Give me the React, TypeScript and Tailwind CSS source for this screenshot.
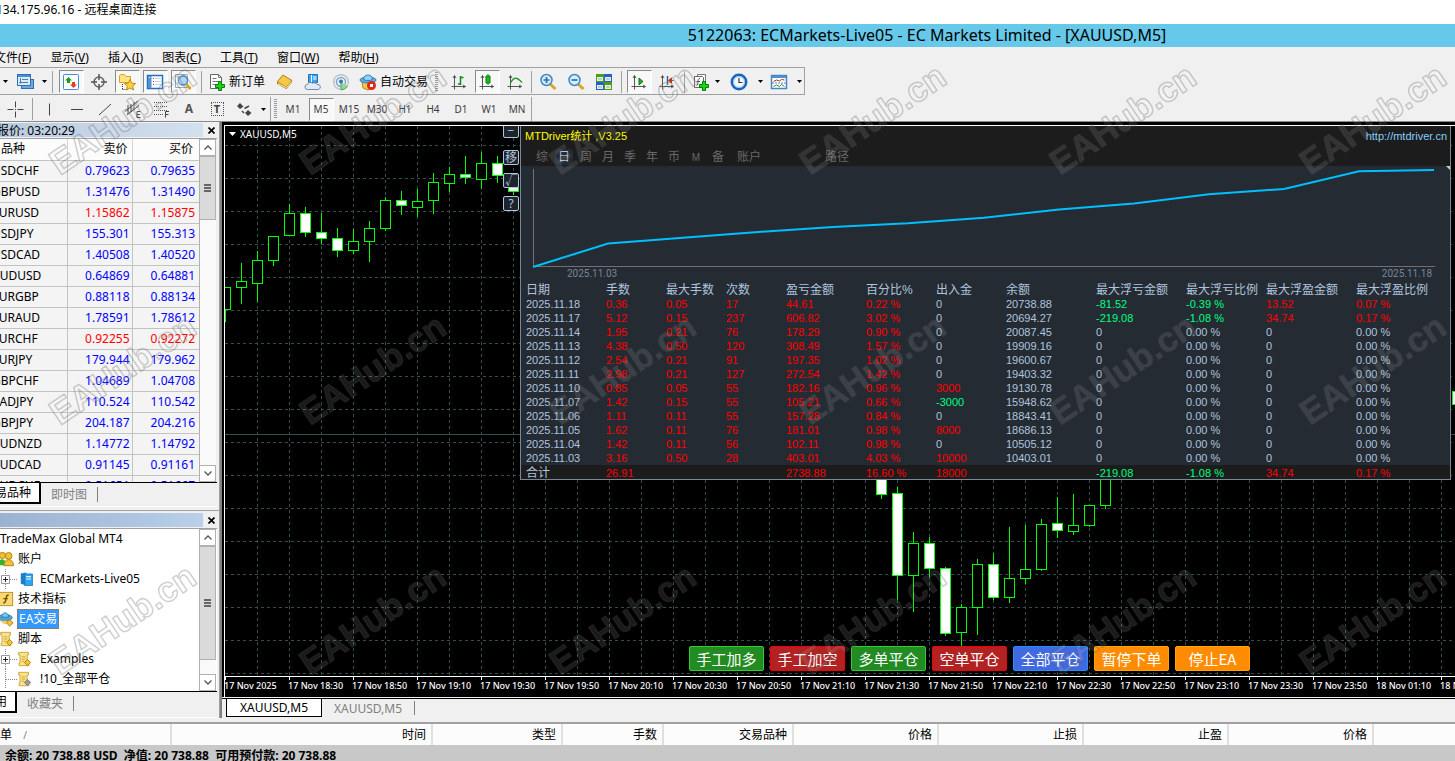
import type { ReactNode } from 'react';

const menus = [
  ['文件', 'F'],
  ['显示', 'V'],
  ['插入', 'I'],
  ['图表', 'C'],
  ['工具', 'T'],
  ['窗口', 'W'],
  ['帮助', 'H'],
];

const periods = ['M1', 'M5', 'M15', 'M30', 'H1', 'H4', 'D1', 'W1', 'MN'];

const quotes = [
  { symbol: 'USDCHF', bid: '0.79623', ask: '0.79635' },
  { symbol: 'GBPUSD', bid: '1.31476', ask: '1.31490' },
  { symbol: 'EURUSD', bid: '1.15862', ask: '1.15875', down: true },
  { symbol: 'USDJPY', bid: '155.301', ask: '155.313' },
  { symbol: 'USDCAD', bid: '1.40508', ask: '1.40520' },
  { symbol: 'AUDUSD', bid: '0.64869', ask: '0.64881' },
  { symbol: 'EURGBP', bid: '0.88118', ask: '0.88134' },
  { symbol: 'EURAUD', bid: '1.78591', ask: '1.78612' },
  { symbol: 'EURCHF', bid: '0.92255', ask: '0.92272', down: true },
  { symbol: 'EURJPY', bid: '179.944', ask: '179.962' },
  { symbol: 'GBPCHF', bid: '1.04689', ask: '1.04708' },
  { symbol: 'CADJPY', bid: '110.524', ask: '110.542' },
  { symbol: 'GBPJPY', bid: '204.187', ask: '204.216' },
  { symbol: 'AUDNZD', bid: '1.14772', ask: '1.14792' },
  { symbol: 'AUDCAD', bid: '0.91145', ask: '0.91161' },
  { symbol: 'AUDCHF', bid: '0.51651', ask: '0.51667' },
];

// slot, high, body top, body bottom, low, bearish
const candles: [number, number, number, number, number, number][] = [
  [0, 161, 161, 183, 196, 0],
  [1, 137, 155, 161, 178, 0],
  [2, 125, 134, 157, 176, 0],
  [3, 110, 110, 134, 140, 0],
  [4, 78, 87, 109, 109, 0],
  [5, 81, 87, 106, 111, 1],
  [6, 87, 106, 112, 118, 1],
  [7, 102, 112, 124, 131, 1],
  [8, 103, 115, 124, 128, 0],
  [9, 95, 102, 115, 136, 0],
  [10, 71, 74, 102, 105, 0],
  [11, 65, 74, 79, 89, 1],
  [12, 63, 75, 81, 91, 0],
  [13, 47, 56, 74, 88, 0],
  [14, 41, 48, 57, 66, 0],
  [15, 30, 48, 51, 58, 1],
  [16, 26, 37, 53, 63, 0],
  [17, 30, 37, 49, 57, 1],
  [18, 50, 56, 65, 69, 1],
  [41, 344, 344, 368, 373, 1],
  [42, 361, 367, 449, 474, 1],
  [43, 406, 417, 449, 486, 0],
  [44, 411, 417, 442, 451, 1],
  [45, 441, 442, 507, 510, 1],
  [46, 478, 481, 506, 520, 0],
  [47, 433, 438, 481, 509, 0],
  [48, 427, 438, 471, 474, 1],
  [49, 401, 452, 471, 477, 0],
  [50, 399, 443, 452, 458, 0],
  [51, 393, 398, 443, 445, 0],
  [52, 371, 397, 404, 412, 1],
  [53, 368, 399, 405, 409, 0],
  [54, 379, 379, 399, 401, 0],
  [55, 344, 344, 379, 383, 0],
  [77, 265, 265, 278, 278, 1],
];

const times = [
  '17 Nov 2025', '17 Nov 18:30', '17 Nov 18:50', '17 Nov 19:10', '17 Nov 19:30',
  '17 Nov 19:50', '17 Nov 20:10', '17 Nov 20:30', '17 Nov 20:50', '17 Nov 21:10',
  '17 Nov 21:30', '17 Nov 21:50', '17 Nov 22:10', '17 Nov 22:30', '17 Nov 22:50',
  '17 Nov 23:10', '17 Nov 23:30', '17 Nov 23:50', '18 Nov 01:10', '18 Nov 01:30',
];

const statHead = ['日期', '手数', '最大手数', '次数', '盈亏金额', '百分比%', '出入金', '余额', '最大浮亏金额', '最大浮亏比例', '最大浮盈金额', '最大浮盈比例'];
const statWidths = ['w-[85px]', 'w-[60px]', 'w-[60px]', 'w-[60px]', 'w-[80px]', 'w-[70px]', 'w-[70px]', 'w-[90px]', 'w-[90px]', 'w-[80px]', 'w-[90px]', ''];
const statRows = [
  ['2025.11.18', '0.36', '0.05', '17', '44.61', '0.22 %', '0', '20738.88', '-81.52', '-0.39 %', '13.52', '0.07 %'],
  ['2025.11.17', '5.12', '0.15', '237', '606.82', '3.02 %', '0', '20694.27', '-219.08', '-1.08 %', '34.74', '0.17 %'],
  ['2025.11.14', '1.95', '0.21', '76', '178.29', '0.90 %', '0', '20087.45', '0', '0.00 %', '0', '0.00 %'],
  ['2025.11.13', '4.38', '0.50', '120', '308.49', '1.57 %', '0', '19909.16', '0', '0.00 %', '0', '0.00 %'],
  ['2025.11.12', '2.54', '0.21', '91', '197.35', '1.02 %', '0', '19600.67', '0', '0.00 %', '0', '0.00 %'],
  ['2025.11.11', '2.98', '0.21', '127', '272.54', '1.42 %', '0', '19403.32', '0', '0.00 %', '0', '0.00 %'],
  ['2025.11.10', '0.85', '0.05', '55', '182.16', '0.96 %', '3000', '19130.78', '0', '0.00 %', '0', '0.00 %'],
  ['2025.11.07', '1.42', '0.15', '55', '105.21', '0.66 %', '-3000', '15948.62', '0', '0.00 %', '0', '0.00 %'],
  ['2025.11.06', '1.11', '0.11', '55', '157.28', '0.84 %', '0', '18843.41', '0', '0.00 %', '0', '0.00 %'],
  ['2025.11.05', '1.62', '0.11', '76', '181.01', '0.98 %', '8000', '18686.13', '0', '0.00 %', '0', '0.00 %'],
  ['2025.11.04', '1.42', '0.11', '56', '102.11', '0.98 %', '0', '10505.12', '0', '0.00 %', '0', '0.00 %'],
  ['2025.11.03', '3.16', '0.50', '28', '403.01', '4.03 %', '10000', '10403.01', '0', '0.00 %', '0', '0.00 %'],
];
const statTotal = ['合计', '26.91', '', '', '2738.88', '16.60 %', '18000', '', '-219.08', '-1.08 %', '34.74', '0.17 %'];

const statTabs = ['综', '日', '周', '月', '季', '年', '币', 'M', '备'];

const tradeButtons = [
  { label: '手工加多', color: 'bg-[#228b22] border-[#32cd32]' },
  { label: '手工加空', color: 'bg-[#b22222] border-[#f00000]' },
  { label: '多单平仓', color: 'bg-[#228b22] border-[#32cd32]' },
  { label: '空单平仓', color: 'bg-[#b22222] border-[#f00000]' },
  { label: '全部平仓', color: 'bg-[#4169e1] border-[#1e90ff]' },
  { label: '暂停下单', color: 'bg-[#ff8c00] border-[#ffa500]' },
  { label: '停止EA', color: 'bg-[#ff8c00] border-[#ffa500]' },
];

const orderColumns = [
  { label: '时间', width: 'w-[261px]' },
  { label: '类型', width: 'w-[130px]' },
  { label: '手数', width: 'w-[101px]' },
  { label: '交易品种', width: 'w-[130px]' },
  { label: '价格', width: 'w-[145px]' },
  { label: '止损', width: 'w-[145px]' },
  { label: '止盈', width: 'w-[145px]' },
  { label: '价格', width: 'w-[145px]' },
];

function Icon({ children, size = 18 }: { children: ReactNode; size?: number }) {
  return (
    <svg width={size} height={size} viewBox="0 0 18 18" fill="none" className="shrink-0">
      {children}
    </svg>
  );
}

function ToolButton({ label, children, pressed, width = 'w-7' }: { label: string; children: ReactNode; pressed?: boolean; width?: string }) {
  return (
    <button aria-label={label} className={`${width} flex h-full shrink-0 items-center justify-center`}>
      {pressed ? (
        <span className="flex h-[23px] w-[25px] items-center justify-center border border-t-[#8a8a8a] border-l-[#8a8a8a] border-r-white border-b-white bg-[#f8f8f8]">
          {children}
        </span>
      ) : (
        children
      )}
    </button>
  );
}

function Caret({ width }: { width: string }) {
  return (
    <button aria-label="更多" className={`${width} flex h-full shrink-0 items-center justify-center`}>
      <svg width="5" height="3" viewBox="0 0 5 3">
        <path d="M0 0h5L2.500 3z" fill="#000" />
      </svg>
    </button>
  );
}

function Sep({ width }: { width: string }) {
  return (
    <span className={`${width} flex shrink-0 justify-center`}>
      <span className="h-[22px] w-px bg-[#a0a0a0]" />
    </span>
  );
}

function Grip({ width }: { width: string }) {
  return (
    <span className={`${width} flex shrink-0 justify-center`}>
      <span className="h-5 w-[3px] bg-[repeating-linear-gradient(#9a9a9a_0_1px,#f0f0f0_1px_2px)]" />
    </span>
  );
}

function PlusBadge() {
  return <path d="M10.500 8.500h3v3h3v3h-3v3h-3v-3h-3v-3h3z" fill="#12d912" stroke="#0a7a0a" />;
}

function Axes() {
  return <path d="M4.500 2.500v14M1.500 13.500h14M3 5l1.500-2.500L6 5M13 12l2.500 1.500L13 15" stroke="#555" />;
}

function PrimaryToolbar() {
  return (
    <div className="flex h-7 w-[805px] shrink-0 items-center border-y border-r border-[#a0a0a0] pt-px">
      <Caret width="w-[10px]" />
      <ToolButton label="图表窗口" width="w-[30px]">
        <Icon>
          <rect x="5.500" y="6.500" width="12" height="9" fill="#6fa8dc" stroke="#2f6fb3" />
          <rect x="1.500" y="1.500" width="13" height="11" fill="#dcebfa" stroke="#2f6fb3" />
          <path d="M2 3h12" stroke="#4a8fd0" strokeWidth="2" />
          <path d="M4.500 5v5.500M3 9.500h9M6 6.500h6" stroke="#4a7fb0" />
        </Icon>
      </ToolButton>
      <Caret width="w-2" />
      <Sep width="w-[9px]" />
      <ToolButton label="市场报价" pressed>
        <Icon>
          <rect x="1.500" y="1.500" width="15" height="15" rx="1" fill="#fff" stroke="#3f8fd6" />
          <path d="M6.500 4L10 7.500H8V10H5V7.500H3z" fill="#18a018" />
          <path d="M11.500 15L8 11.500h2V9h3v2.500h2z" fill="#e8401c" />
        </Icon>
      </ToolButton>
      <ToolButton label="十字线">
        <Icon>
          <circle cx="9" cy="9" r="5" stroke="#666" strokeWidth="1.500" />
          <path d="M9 1v6M9 11v6M1 9h6M11 9h6" stroke="#555" strokeWidth="1.500" />
        </Icon>
      </ToolButton>
      <ToolButton label="导航" pressed>
        <Icon>
          <path d="M1.500 3l1-1.500h4l1.500 2h4.500v6h-11z" fill="#ffe487" stroke="#d8a520" />
          <path d="M4.500 11v6M4.500 16.500h3" stroke="#333" strokeDasharray="1 1" />
          <path d="M12 6.500l1.700 3.600 3.900.4-2.900 2.600.8 3.900L12 15l-3.500 2 .8-3.900-2.900-2.600 3.900-.4z" fill="#ffd33c" stroke="#c08a10" />
        </Icon>
      </ToolButton>
      <ToolButton label="终端" pressed>
        <Icon>
          <rect x="1.500" y="2.500" width="15" height="13" fill="#fff" stroke="#2670c0" strokeWidth="1.500" />
          <rect x="2" y="3" width="3.500" height="12" fill="#4f94da" />
          <path d="M3 4.500h1" stroke="#fff" />
          <path d="M7 5.500h1M7 8.500h1M7 11.500h1" stroke="#d02020" />
          <path d="M9 5.500h6M9 8.500h6M9 11.500h6" stroke="#c3d5ea" />
        </Icon>
      </ToolButton>
      <ToolButton label="数据窗口" pressed>
        <Icon>
          <path d="M1.500 1.500h12v13h-12z" fill="#f4f8fc" stroke="#8fa7c2" />
          <path d="M4 3v9M8 3v9M11 3v9" stroke="#b0c4da" />
          <circle cx="9" cy="7.500" r="4.500" fill="#a9d4f5" fillOpacity=".9" stroke="#4f86bd" strokeWidth="1.300" />
          <path d="M12.500 11.500l4 4.500" stroke="#d9a420" strokeWidth="3" />
        </Icon>
      </ToolButton>
      <Sep width="w-2" />
      <button className="flex h-full items-center">
        <span className="flex w-6 justify-center">
          <Icon>
            <path d="M2.500 1.500h8l3 3v11h-11z" fill="#fff" stroke="#666" />
            <path d="M10.500 1.500v3h3M4.500 5.500h4M4.500 8.500h6M4.500 11.500h4" stroke="#777" />
            <PlusBadge />
          </Icon>
        </span>
        <span className="mr-1.5">新订单</span>
      </button>
      <ToolButton label="MetaEditor">
        <Icon>
          <path d="M1 9l6-7 9 5.500v2L10.500 16 1 11z" fill="#b07810" />
          <path d="M1 9l6-7 9 5.500L10.500 14z" fill="#f5c84a" stroke="#b98518" />
          <path d="M2 10.700l8.500 4 5-5.500" stroke="#fff3c8" />
        </Icon>
      </ToolButton>
      <ToolButton label="社区">
        <Icon>
          <path d="M4.500 1.500h9v8h-9z" fill="#37a4f0" stroke="#1c72bd" />
          <path d="M7.500 2v7M9 4h3.500M9 6h3.500" stroke="#fff" />
          <path d="M3.500 16.500a2.500 2.500 0 010-5 3 3 0 015-1.300 3 3 0 014.500 1.300 2.500 2.500 0 011.500 5z" fill="#e3eaf5" stroke="#7488ad" />
        </Icon>
      </ToolButton>
      <ToolButton label="信号">
        <Icon>
          <circle cx="9" cy="9" r="7.300" stroke="#b5c6d6" strokeWidth="1.500" />
          <circle cx="9" cy="9" r="4.500" stroke="#7fa9c4" strokeWidth="1.500" />
          <path d="M9 9v8a8 8 0 006.500-4" fill="#9fd49f" stroke="#53a653" />
          <circle cx="9" cy="8.500" r="2" fill="#2a78b8" />
        </Icon>
      </ToolButton>
      <button className="flex h-full items-center">
        <span className="flex w-[25px] justify-center">
          <Icon>
            <path d="M3 9h12l-1 6-5 2-5-2z" fill="#f4c64a" stroke="#b88718" />
            <ellipse cx="9" cy="7" rx="8" ry="3" fill="#5fb0e2" stroke="#2f7fb5" />
            <path d="M4.500 6.500c0-6 9-6 9 0-2.500 1.500-6.500 1.500-9 0z" fill="#8fd0f3" stroke="#2f7fb5" />
            <circle cx="12.500" cy="12.500" r="4.500" fill="#e02818" />
            <path d="M11 11h3v3h-3z" fill="#fff" />
          </Icon>
        </span>
        <span>自动交易</span>
      </button>
      <Grip width="w-[17px]" />
      <ToolButton label="柱状图">
        <Icon>
          <Axes />
          <path d="M10.500 3v9M10.500 4.500h3M8 11h2.500" stroke="#108a10" strokeWidth="1.500" />
        </Icon>
      </ToolButton>
      <ToolButton label="蜡烛图" pressed>
        <Icon>
          <Axes />
          <path d="M10 1v11" stroke="#0a7a0a" />
          <path d="M8 3h4v7H8z" fill="#18c018" stroke="#0a7a0a" />
        </Icon>
      </ToolButton>
      <ToolButton label="折线图">
        <Icon>
          <Axes />
          <path d="M4.500 10C8 3.500 11 4 16 9.500" stroke="#2a9a2a" strokeWidth="1.300" />
        </Icon>
      </ToolButton>
      <Sep width="w-[5px]" />
      <ToolButton label="放大">
        <Icon>
          <path d="M11.500 11.500L16.500 16" stroke="#dba520" strokeWidth="3" />
          <circle cx="7.500" cy="7" r="5.500" fill="#d6ecfb" stroke="#3f86c4" strokeWidth="1.500" />
          <path d="M4.500 7h6M7.500 4v6" stroke="#2f6fae" strokeWidth="1.700" />
        </Icon>
      </ToolButton>
      <ToolButton label="缩小">
        <Icon>
          <path d="M11.500 11.500L16.500 16" stroke="#dba520" strokeWidth="3" />
          <circle cx="7.500" cy="7" r="5.500" fill="#d6ecfb" stroke="#3f86c4" strokeWidth="1.500" />
          <path d="M4.500 7h6" stroke="#2f6fae" strokeWidth="1.700" />
        </Icon>
      </ToolButton>
      <ToolButton label="平铺窗口">
        <Icon>
          <path d="M1 1h8v8H1zM9 9h8v8H9z" fill="#4f9c1c" />
          <path d="M9 1h8v8H9zM1 9h8v8H1z" fill="#2360c8" />
          <path d="M2 4h6v4H2zM10 4h6v4h-6zM2 12h6v4H2zM10 12h6v4h-6z" fill="#e4f0dc" />
          <path d="M3 6h4M11 6h4M3 14h4M11 14h4" stroke="#8fb0d8" />
        </Icon>
      </ToolButton>
      <Sep width="w-[7px]" />
      <ToolButton label="自动滚动" pressed>
        <Icon>
          <Axes />
          <path d="M9 5l4 3.500L9 12z" fill="#22b022" stroke="#0a7a0a" />
        </Icon>
      </ToolButton>
      <ToolButton label="图表平移">
        <Icon>
          <Axes />
          <path d="M9.500 3v9" stroke="#3060a0" strokeWidth="1.500" />
          <path d="M15.500 7.500h-4M13.500 5l-3 2.500 3 2.500z" stroke="#c03810" fill="#c03810" />
        </Icon>
      </ToolButton>
      <Sep width="w-[6px]" />
      <ToolButton label="指标列表">
        <Icon>
          <path d="M5.500 1.500h8v10h-8z" fill="#fff" stroke="#777" />
          <path d="M2.500 3.500h8l1 1v10h-9z" fill="#fff" stroke="#666" />
          <path d="M8 5.500c-2 0-2 1.500-2 3s0 4-1.500 4M4.500 8.500H8" stroke="#555" />
          <PlusBadge />
        </Icon>
      </ToolButton>
      <Caret width="w-[5px]" />
      <ToolButton label="时间周期" width="w-[38px]">
        <Icon>
          <circle cx="9" cy="9" r="7.200" fill="#f4f9ff" stroke="#1a66bf" strokeWidth="2.500" />
          <circle cx="9" cy="9" r="5.500" stroke="#8fbfee" />
          <path d="M9 5v4.500h3.500" stroke="#333" strokeWidth="1.200" />
        </Icon>
      </ToolButton>
      <Caret width="w-[5px]" />
      <ToolButton label="模板" width="w-[32px]">
        <Icon>
          <rect x="1.500" y="2.500" width="15" height="13" fill="#fff" stroke="#4a86c4" strokeWidth="1.500" />
          <path d="M2 4h14" stroke="#4a90d8" strokeWidth="2" />
          <path d="M3.500 8.500l3-1.500 3 1 2-1.500 3 .5" stroke="#a83020" />
          <path d="M2 10h14" stroke="#4a86c4" strokeDasharray="2 1" />
          <path d="M3.500 13.500l3-1.500 3 1.500 2-2 3 2" stroke="#2a9a2a" />
        </Icon>
      </ToolButton>
      <Caret width="w-[8px]" />
    </div>
  );
}

function DrawingToolbar() {
  return (
    <div className="flex h-[27px] items-center border-b border-[#8a8a8a] pt-0.5">
      <ToolButton label="十字光标" width="w-[30px]">
        <Icon>
          <path d="M9.500 1.500v6M9.500 11.500v6M1.500 9.500h6M11.500 9.500h6M9 9.500h1" stroke="#444" />
        </Icon>
      </ToolButton>
      <Sep width="w-[5px]" />
      <ToolButton label="垂直线">
        <Icon><path d="M9.500 3.500v12" stroke="#444" /></Icon>
      </ToolButton>
      <ToolButton label="水平线">
        <Icon><path d="M3 9.500h12" stroke="#444" /></Icon>
      </ToolButton>
      <ToolButton label="趋势线">
        <Icon><path d="M3 15L15 4" stroke="#444" /></Icon>
      </ToolButton>
      <ToolButton label="等距通道">
        <Icon>
          <path d="M1 11.500L14 1M3 15L15 5.500M4 5v9M7 4v8M10 2v8" stroke="#444" />
          <path d="M16.500 11.500h-3.500v6h3.500M13 14.500h3" stroke="#444" />
        </Icon>
      </ToolButton>
      <ToolButton label="斐波纳契">
        <Icon>
          <path d="M2 2.500h14M2 6.500h14M2 10.500h14M2 14.500h9" stroke="#555" strokeDasharray="1 1" />
          <path d="M13.500 17.500v-6h3.500M13.500 14.500h3" stroke="#444" />
        </Icon>
      </ToolButton>
      <button className="w-7 text-xs font-bold text-[#555]">A</button>
      <button className="flex w-7 justify-center">
        <span className="h-[14px] w-[13px] border border-dotted border-[#555] text-[11px] leading-3 font-bold text-[#444]">T</span>
      </button>
      <ToolButton label="箭头" width="w-[26px]">
        <Icon>
          <path d="M5 3l3.500 3.500L5 9 2 6zM13 10l3.500 3-3.500 3-3-3z" fill="#444" />
          <path d="M7 11l2 2M9.500 8.500L14 6" stroke="#444" strokeWidth="1.500" />
        </Icon>
      </ToolButton>
      <Caret width="w-[13px]" />
      <div className="flex h-full items-center border-x border-[#a0a0a0]">
        <Grip width="w-2" />
        {periods.map((p) => (
          <button key={p} className="flex h-full w-7 items-center justify-center text-[10px] text-[#3c3c3c]">
            {p === 'M5' ? (
              <span className="flex h-[23px] w-[25px] items-center justify-center border border-t-[#8a8a8a] border-l-[#8a8a8a] border-r-white border-b-white bg-[#f8f8f8]">
                {p}
              </span>
            ) : (
              p
            )}
          </button>
        ))}
      </div>
    </div>
  );
}

function ScrollBar({ thumb }: { thumb: string }) {
  return (
    <div className="flex w-[17px] shrink-0 flex-col border-l border-[#b0b0b0] bg-[#f9f9f9]">
      <button aria-label="向上" className="flex h-[17px] items-center justify-center border border-l-0 border-[#b0b0b0] bg-white">
        <svg width="8" height="5" viewBox="0 0 8 5" fill="none"><path d="M.5 4.500L4 1l3.500 3.500" stroke="#555" strokeWidth="1.300" /></svg>
      </button>
      <div className={`${thumb} flex flex-col items-center justify-center gap-px border border-l-0 border-[#b0b0b0] bg-[#dadada]`}>
        <span className="h-0.5 w-[7px] bg-[#666]" />
        <span className="h-0.5 w-[7px] bg-[#666]" />
        <span className="h-0.5 w-[7px] bg-[#666]" />
      </div>
      <button aria-label="向下" className="mt-auto flex h-[17px] items-center justify-center border border-l-0 border-[#b0b0b0] bg-white">
        <svg width="8" height="5" viewBox="0 0 8 5" fill="none"><path d="M.5.5L4 4 7.500.5" stroke="#555" strokeWidth="1.300" /></svg>
      </button>
    </div>
  );
}

function CloseButton() {
  return (
    <button aria-label="关闭" className="flex w-4 items-center justify-center">
      <svg width="7" height="7" viewBox="0 0 7 7"><path d="M.5.5l6 6M6.500.5l-6 6" stroke="#000" strokeWidth="1.700" /></svg>
    </button>
  );
}

function MarketWatch() {
  return (
    <section>
      <div className="mt-px flex h-[15px] border-b border-[#f0f0f0]">
        <h2 className="w-[203px] -indent-[3px] bg-linear-to-r from-[#b9cbe0] to-[#d3e0ee] leading-4">报价: 03:20:29</h2>
        <CloseButton />
      </div>
      <div className="flex h-[345px] w-[217px] overflow-hidden border-y border-t-[#a0a0a0] border-b-black">
        <table className="h-max w-[199px] table-fixed border-collapse bg-[#f4f4f4]">
          <thead>
            <tr className="h-[21px] border-b border-[#c3c3c3] bg-[#fcfcfc]">
              <th className="w-[67px] border-r border-[#d5d5d5] pl-px text-left font-normal">品种</th>
              <th className="w-[65px] border-r border-[#d5d5d5] pr-1 text-right font-normal">卖价</th>
              <th className="pr-1.5 text-right font-normal">买价</th>
            </tr>
          </thead>
          <tbody>
            {quotes.map((q) => (
              <tr key={q.symbol} className="h-[21px] border-b border-[#c3c3c3]">
                <td className="border-r border-[#c3c3c3] -indent-2">{q.symbol}</td>
                <td className={`border-r border-[#c3c3c3] pr-0.5 text-right ${q.down ? 'text-[#ff0000]' : 'text-[#0000ff]'}`}>{q.bid}</td>
                <td className={`pr-1 text-right ${q.down ? 'text-[#ff0000]' : 'text-[#0000ff]'}`}>{q.ask}</td>
              </tr>
            ))}
          </tbody>
        </table>
        <ScrollBar thumb="h-16" />
      </div>
      <div className="flex h-6 w-[217px] border-b border-white">
        <button className="flex h-[21px] w-[41px] items-center justify-end border-r-2 border-b-2 border-black bg-white pr-2 whitespace-nowrap">交易品种</button>
        <button className="mt-1 h-[15px] border-r border-[#808080] pr-2.5 pl-2.5 leading-[13px] text-[#808080]">即时图</button>
      </div>
    </section>
  );
}

function Scroll({ gray }: { gray?: boolean }) {
  return (
    <Icon size={16}>
      <path d="M3 1.500h11v3h-1.500v9h2v3h-11v-3h1v-9H3z" fill="#fbe38c" stroke="#c9a030" />
      <path d="M6.500 6.500h4M6.500 9h4M6.500 11.500h3" stroke="#c9a030" />
      <path d="M13 9.500l3.500 3.500-3.500 3.500L9.500 13z" fill={gray ? '#999' : '#f2c230'} stroke={gray ? '#777' : '#a87a10'} />
    </Icon>
  );
}

function Expander() {
  return (
    <span className="flex w-5 items-center">
      <svg width="17" height="20" viewBox="0 0 17 20" fill="none">
        <path d="M5.500 0v6M5.500 15v5M10 10.500h7" stroke="#888" strokeDasharray="1 1" />
        <path d="M1.500 6.500h8v8h-8z" fill="#fff" stroke="#999" />
        <path d="M3 10.500h5M5.500 8v5" stroke="#222" />
      </svg>
    </span>
  );
}

function Navigator() {
  return (
    <section className="mt-[3px] border-t border-[#a0a0a0]">
      <div className="mt-0.5 flex h-[14px]">
        <h2 aria-label="导航" className="w-[203px] bg-linear-to-r from-[#9ab3d0] to-[#b9cfea]" />
        <CloseButton />
      </div>
      <div className="mt-px flex h-[164px] w-[217px] border-y border-t-[#a0a0a0] border-b-black bg-white">
        <ul className="w-[199px] overflow-hidden whitespace-nowrap [&>li]:flex [&>li]:h-5 [&>li]:items-center">
          <li>TradeMax Global MT4</li>
          <li className="gap-1">
            <span className="-ml-0.5">
              <Icon size={16}>
                <circle cx="5" cy="5" r="3.500" fill="#f2c230" stroke="#a87a10" />
                <path d="M0 16c0-9 9-9 9 0z" fill="#2fb52f" />
                <circle cx="12" cy="5.500" r="3.800" fill="#f2c230" stroke="#a87a10" />
                <path d="M6.500 16.500c0-9 11-9 11 0z" fill="#f2c230" stroke="#a87a10" />
              </Icon>
            </span>
            <span>账户</span>
          </li>
          <li>
            <Expander />
            <span className="w-5">
              <Icon size={14}>
                <path d="M1 2l7-1.500v17L1 15z" fill="#1a80cc" />
                <path d="M6 2.500h10v15H6z" fill="#2fa6ec" stroke="#1a70b8" />
                <path d="M8 6h6M8 9h6" stroke="#fff" strokeWidth="1.500" />
              </Icon>
            </span>
            <span>ECMarkets-Live05</span>
          </li>
          <li className="gap-1">
            <span className="-ml-0.5">
              <Icon size={16}>
                <rect x="1.500" y="1.500" width="15" height="15" fill="#f8d870" stroke="#b88c20" />
                <path d="M12 4.500c-3 0-2.500 2-3 4.500s-.5 4.500-3 4.500M6 8.500h5" stroke="#6a4c08" strokeWidth="1.500" />
              </Icon>
            </span>
            <span>技术指标</span>
          </li>
          <li className="gap-[3px]">
            <span className="-ml-0.5">
              <Icon size={16}>
                <ellipse cx="8" cy="7.500" rx="8" ry="3.500" fill="#4fa6da" stroke="#2a76ac" />
                <path d="M4 7c0-6.500 8-6.500 8 0z" fill="#7cc6ee" stroke="#2a76ac" />
                <path d="M2 11h8v3l-3 1z" fill="#f5cc68" />
                <path d="M13 9.500l4 3.800-4 3.700-3.500-3.700z" fill="#f2c230" stroke="#a87a10" />
              </Icon>
            </span>
            <span className="border border-dotted border-[#c06a10] bg-[#3399ff] px-px leading-[18px] text-white">EA交易</span>
          </li>
          <li className="gap-1">
            <span className="-ml-0.5"><Scroll /></span>
            <span>脚本</span>
          </li>
          <li>
            <Expander />
            <span className="-ml-1 w-6"><Scroll /></span>
            <span>Examples</span>
          </li>
          <li>
            <span className="w-5">
              <svg width="17" height="20" viewBox="0 0 17 20" fill="none">
                <path d="M5.500 0v20M6 10.500h11" stroke="#888" strokeDasharray="1 1" />
              </svg>
            </span>
            <span className="-ml-1 w-6"><Scroll gray /></span>
            <span>!10_全部平仓</span>
          </li>
        </ul>
        <ScrollBar thumb="h-[114px]" />
      </div>
      <div className="flex h-[26px] w-[217px] border-b border-white">
        <button className="flex h-[21px] w-[17px] items-center justify-end border-r-2 border-b-2 border-black bg-white pr-2 whitespace-nowrap">常用</button>
        <button className="mt-1 h-[15px] border-r border-[#808080] px-2.5 leading-[13px] text-[#808080]">收藏夹</button>
      </div>
    </section>
  );
}

function PriceChart() {
  const columns = Array.from({ length: 80 }, (_, i) => i * 32 + 32);
  const rows = Array.from({ length: 17 }, (_, i) => i * 33 + 19);
  return (
    <svg className="block h-[555px] w-full" shapeRendering="crispEdges">
      {columns.map((x) => (
        <line key={x} x1={x + 0.5} x2={x + 0.5} y1="0" y2="550" stroke="#2f4f4f" strokeDasharray="3 3" />
      ))}
      {rows.map((y) => (
        <line key={y} x1="0" x2="100%" y1={y + 0.5} y2={y + 0.5} stroke="#2f4f4f" strokeDasharray="3 3" />
      ))}
      <line x1="0" x2="100%" y1="308.500" y2="308.500" stroke="#2f4f4f" />
      {candles.map(([slot, high, top, bottom, low, bear]) => {
        const x = slot * 16 + 0.5;
        return (
          <g key={slot} stroke="#00ff00">
            <line x1={x} x2={x} y1={high} y2={low} />
            <rect x={x - 5} y={top + 0.5} width="10" height={bottom - top} fill={bear ? '#fff' : '#000'} />
          </g>
        );
      })}
      <line x1="0" x2="100%" y1="550.500" y2="550.500" stroke="#fff" />
      {Array.from({ length: 40 }, (_, i) => (
        <line key={i} x1={i * 64 + 0.5} x2={i * 64 + 0.5} y1="550" y2="554" stroke="#fff" />
      ))}
    </svg>
  );
}

function tone(value: string, column: number) {
  if (value.startsWith('-')) return 'text-[#00ff7f]';
  if (column === 0 || column === 7 || value === '0' || value === '0.00 %') return 'text-[#b0c4de]';
  return 'text-[#ff0000]';
}

function StatsPanel() {
  return (
    <section className="absolute top-0 right-1 left-[295px] border border-t-0 border-[#778899] bg-[#242b33] font-['Liberation_Sans','Noto_Sans_CJK_SC',sans-serif]">
      <header className="h-10 bg-[#1c1c1c]">
        <div className="flex h-[19px] items-center justify-between pr-[3px] pl-1 text-[11px]">
          <h2 className="text-[#ffff00]">MTDriver统计 ,V3.25</h2>
          <a href="http://mtdriver.cn" className="text-[#87cefa]">http://mtdriver.cn</a>
        </div>
        <nav className="mt-1 ml-2.5 flex text-[#696969]">
          {statTabs.map((t) => (
            <button key={t} className="flex w-[22px] justify-center">
              <span className={`h-4 w-[18px] text-center leading-[17px] ${t === '日' ? 'rounded-sm bg-[#242b33] text-[#b0c4de]' : ''} ${t === 'M' ? 'text-[10px]' : ''}`}>{t}</span>
            </button>
          ))}
          <button className="ml-2 w-6 leading-[17px]">账户</button>
          <button className="ml-16 w-6 leading-[17px]">路径</button>
        </nav>
      </header>
      <svg className="block h-[102px] w-full" viewBox="0 0 929 102" preserveAspectRatio="none" fill="none">
        <path d="M12.500 3v97.500H914" stroke="#766f70" />
        <path
          d="M12 101L87 77.500 162 71.700 237 66 312 61.100 387 57.300 463 51.700 538 43.400 613 37.400 688 28.200 763 23 838 5.300 913 4"
          stroke="#00bfff"
          strokeWidth="2"
        />
        <path d="M929 -4v8l-4-4z" fill="#d0d0d0" />
      </svg>
      <div className="flex h-4 justify-between pr-[18px] pl-[46px] font-['Liberation_Sans_Narrow','Roboto',sans-serif] text-[10px] leading-[11px] text-[#778899]">
        <span>2025.11.03</span>
        <span>2025.11.18</span>
      </div>
      <table className="w-full table-fixed border-collapse text-left text-[11px] leading-[14px] whitespace-nowrap">
        <thead>
          <tr className="text-xs leading-[13px] text-[#b0c4de]">
            {statHead.map((h, i) => (
              <th key={h} className={`${statWidths[i]} p-0 font-normal ${i === 0 ? 'pl-[5px]' : ''}`}>{h}</th>
            ))}
          </tr>
        </thead>
        <tbody>
          {statRows.map((row) => (
            <tr key={row[0]}>
              {row.map((v, i) => (
                <td key={i} className={`p-0 ${i === 0 ? 'pl-[5px]' : ''} ${tone(v, i)}`}>{v}</td>
              ))}
            </tr>
          ))}
        </tbody>
        <tfoot>
          <tr className="bg-[#1c1c1c] leading-3">
            {statTotal.map((v, i) => (
              <td key={i} className={`p-0 pt-0.5 ${i === 0 ? 'pl-[5px] text-xs leading-3' : ''} ${tone(v, i)}`}>{v}</td>
            ))}
          </tr>
        </tfoot>
      </table>
    </section>
  );
}

function ChartWindow() {
  const side = 'h-[15px] border border-[#b0c4de] rounded-xs bg-[#1e242c] text-center text-xs leading-[13px] text-[#b0c4de]';
  return (
    <main className="flex min-w-0 flex-1 flex-col border-l-2 border-[#808080] bg-[#f0f0f0]">
      <div className="bg-black pt-[3px] pl-0.5">
        <div className="relative h-[572px] overflow-hidden border-t border-l border-white bg-black">
          <PriceChart />
          <div className="absolute top-0.5 left-1 flex items-center gap-1 text-[10px] leading-3 text-white">
            <svg width="7" height="4" viewBox="0 0 7 4"><path d="M0 0h7L3.500 4z" fill="#fff" /></svg>
            <span>XAUUSD,M5</span>
          </div>
          <div className="absolute -top-[3px] left-[278px] flex w-4 flex-col gap-2">
            <button className={`${side} mb-1`}>−</button>
            <button className={side}>移</button>
            <button className={side}>√</button>
            <button className={side}>?</button>
          </div>
          <StatsPanel />
          <div className="absolute bottom-[26px] left-[464px] flex gap-1.5">
            {tradeButtons.map((b) => (
              <button key={b.label} className={`${b.color} h-[25px] w-[75px] rounded-xs border font-['Noto_Sans_CJK_SC',sans-serif] text-[15px] leading-[23px] text-white`}>
                {b.label}
              </button>
            ))}
          </div>
          <div className="-ml-px flex overflow-hidden text-[9px] leading-[10px] font-medium text-white">
            {times.map((t) => (
              <span key={t} className="w-16 shrink-0 whitespace-nowrap">{t}</span>
            ))}
          </div>
        </div>
      </div>
      <div className="mt-px flex flex-1 border-t border-black pl-1">
        <button className="h-[18px] w-24 border-x border-b border-black bg-white leading-[17px]">XAUUSD,M5</button>
        <button className="mt-0.5 h-[14px] border-r border-[#808080] px-3 leading-[13px] text-[#808080]">XAUUSD,M5</button>
      </div>
    </main>
  );
}

function Terminal() {
  return (
    <footer className="mt-1 border-t-2 border-[#a0a0a0]">
      <table className="w-full table-fixed border-collapse bg-[#fcfcfc]">
        <thead>
          <tr className="h-[21px]">
            <th className="w-[171px] border-r-2 border-[#e0e0e0] p-0 text-left font-normal -indent-3">
              订单 <span className="ml-2 text-[10px] text-[#808080]">/</span>
            </th>
            {orderColumns.map((c, i) => (
              <th key={i} className={`${c.width} border-r-2 border-[#e0e0e0] p-0 pr-[5px] text-right font-normal`}>{c.label}</th>
            ))}
            <th />
          </tr>
        </thead>
      </table>
      <p className="h-4 overflow-hidden bg-[#c8c8c8] pl-[5px] leading-[21px] font-bold whitespace-pre">
        余额: 20 738.88 USD  净值: 20 738.88  可用预付款: 20 738.88
      </p>
    </footer>
  );
}

function Watermark() {
  return (
    <svg className="pointer-events-none absolute inset-0 h-full w-full" aria-hidden="true">
      <defs>
        <pattern id="mark" width="250" height="250" patternUnits="userSpaceOnUse" x="36" y="-62">
          <text
            transform="translate(24 238) rotate(-34)"
            className="font-['Liberation_Sans',sans-serif] text-[35px] font-bold"
            fill="#fff"
            fillOpacity=".1"
            stroke="#444"
            strokeOpacity=".25"
            strokeWidth="1.500"
            strokeLinejoin="round"
          >
            EAHub.cn
          </text>
        </pattern>
      </defs>
      <rect width="100%" height="100%" fill="url(#mark)" />
    </svg>
  );
}

export default function App() {
  return (
    <div className="relative overflow-hidden bg-[#f0f0f0] font-['Noto_Sans','Noto_Sans_CJK_SC',sans-serif] text-xs leading-4 text-black">
      <div className="h-6 bg-white -indent-1 leading-5">134.175.96.16 - 远程桌面连接</div>
      <h1 className="h-[23px] bg-[#66c9ea] pl-[399px] text-center text-base leading-[23px]">
        5122063: ECMarkets-Live05 - EC Markets Limited - [XAUUSD,M5]
      </h1>
      <nav className="-ml-1.5 flex h-5 items-center gap-[19px] pt-0.5">
        {menus.map(([name, key]) => (
          <button key={key}>
            {name}(<u>{key}</u>)
          </button>
        ))}
      </nav>
      <PrimaryToolbar />
      <DrawingToolbar />
      <div className="flex">
        <aside className="w-[220px] shrink-0 border-r border-[#a0a0a0]">
          <MarketWatch />
          <Navigator />
        </aside>
        <ChartWindow />
      </div>
      <Terminal />
      <Watermark />
    </div>
  );
}
